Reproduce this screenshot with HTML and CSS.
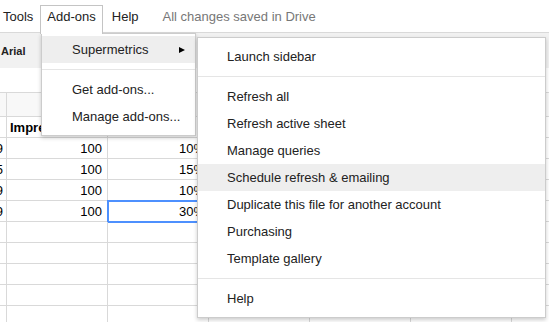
FILE: index.html
```html
<!DOCTYPE html>
<html lang="en">
<head>
    <meta charset="UTF-8">
    <meta name="viewport" content="width=device-width, initial-scale=1.0">
    <title>Add-ons menu</title>
    <link rel="stylesheet" href="styles.css">
</head>
<body>
    <div class="app">
        <div class="menubar">
            <span class="menu-item first">Tools</span>
            <span class="menu-item open">Add-ons</span>
            <span class="menu-item">Help</span>
            <span class="saved">All changes saved in Drive</span>
        </div>

        <div class="toolbar">
            <span class="font-name">Arial</span>
        </div>

        <div class="formula-bar"></div>

        <div class="grid">
            <!-- column headers -->
            <div class="cell head"></div><div class="cell head"></div><div class="cell head"></div><div class="cell head"></div><div class="cell head"></div><div class="cell head"></div><div class="cell head"></div>

            <div class="cell bold">CPC</div><div class="cell bold">Impressions</div><div class="cell bold">CTR</div><div class="cell"></div><div class="cell"></div><div class="cell"></div><div class="cell"></div>
            <div class="cell num first-col">0.09</div><div class="cell num">100</div><div class="cell num pct">10%</div><div class="cell"></div><div class="cell"></div><div class="cell"></div><div class="cell"></div>
            <div class="cell num first-col">0.15</div><div class="cell num">100</div><div class="cell num pct">15%</div><div class="cell"></div><div class="cell"></div><div class="cell"></div><div class="cell"></div>
            <div class="cell num first-col">0.09</div><div class="cell num">100</div><div class="cell num pct">10%</div><div class="cell"></div><div class="cell"></div><div class="cell"></div><div class="cell"></div>
            <div class="cell num first-col">0.09</div><div class="cell num">100</div><div class="cell num pct selected">30%</div><div class="cell"></div><div class="cell"></div><div class="cell"></div><div class="cell"></div>
            <div class="cell"></div><div class="cell"></div><div class="cell"></div><div class="cell"></div><div class="cell"></div><div class="cell"></div><div class="cell"></div>
            <div class="cell"></div><div class="cell"></div><div class="cell"></div><div class="cell"></div><div class="cell"></div><div class="cell"></div><div class="cell"></div>
            <div class="cell"></div><div class="cell"></div><div class="cell"></div><div class="cell"></div><div class="cell"></div><div class="cell"></div><div class="cell"></div>
            <div class="cell"></div><div class="cell"></div><div class="cell"></div><div class="cell"></div><div class="cell"></div><div class="cell"></div><div class="cell"></div>
            <div class="cell"></div><div class="cell"></div><div class="cell"></div><div class="cell"></div><div class="cell"></div><div class="cell"></div><div class="cell"></div>
        </div>

        <!-- Add-ons dropdown -->
        <div class="dropdown addons-menu">
            <div class="item active has-sub">Supermetrics <span class="arrow"></span></div>
            <div class="separator"></div>
            <div class="item">Get add-ons...</div>
            <div class="item">Manage add-ons...</div>
        </div>

        <!-- Supermetrics submenu -->
        <div class="dropdown submenu">
            <div class="item">Launch sidebar</div>
            <div class="separator"></div>
            <div class="item">Refresh all</div>
            <div class="item">Refresh active sheet</div>
            <div class="item">Manage queries</div>
            <div class="item active">Schedule refresh &amp; emailing</div>
            <div class="item">Duplicate this file for another account</div>
            <div class="item">Purchasing</div>
            <div class="item">Template gallery</div>
            <div class="separator"></div>
            <div class="item">Help</div>
        </div>
    </div>
</body>
</html>
```

FILE: styles.css
```css
body {
    margin: 0;
    font-family: "Liberation Sans", Arial, sans-serif;
    font-size: 13px;
    color: #222;
    background: #fff;
}
.app {
    position: relative;
    width: 549px;
    height: 322px;
    overflow: hidden;
}

/* menu bar */
.menubar {
    display: flex;
    align-items: flex-end;
    height: 32px;
    border-bottom: 1px solid #d9d9d9;
}
.menu-item {
    height: 27px;
    box-sizing: border-box;
    padding: 0 8px;
    border: 1px solid transparent;
    border-bottom: none;
    line-height: 22px;
    color: #222;
}
.menu-item.first {
    padding-left: 2px;
    padding-right: 6px;
}
.menu-item.open {
    position: relative;
    z-index: 3;
    height: 29px;
    margin-bottom: -2px;
    padding: 0 6px;
    background: #fff;
    border-color: #c4c4c4;
}
.saved {
    margin-left: 15px;
    height: 27px;
    line-height: 24px;
    color: #777;
}

/* toolbar + formula bar */
.toolbar {
    height: 35px;
    background: #f1f1f1;
    line-height: 35px;
    padding-left: 1px;
}
.font-name {
    font-size: 11px;
    font-weight: bold;
    color: #222;
}
.formula-bar {
    height: 24px;
}

/* sheet grid */
.grid {
    display: grid;
    grid-template-columns: repeat(7, 101px);
    margin-left: -94px;
    border-top: 1px solid #d9d9d9;
}
.cell {
    box-sizing: border-box;
    height: 21px;
    line-height: 21px;
    padding: 0 5px 0 3px;
    border-right: 1px solid #d9d9d9;
    border-bottom: 1px solid #d9d9d9;
    white-space: nowrap;
    color: #000;
}
.cell.head {
    height: 24px;
    background: #f8f8f8;
}
.cell.bold {
    font-weight: bold;
}
.cell.num {
    text-align: right;
}
.cell.first-col {
    padding-right: 3px;
}
.cell.pct {
    padding-right: 3px;
}
.cell.selected {
    outline: 2px solid #4d90fe;
    outline-offset: -1px;
}

/* menus */
.dropdown {
    position: absolute;
    z-index: 2;
    background: #fff;
    border: 1px solid rgba(0, 0, 0, 0.2);
    box-shadow: 0 2px 4px rgba(0, 0, 0, 0.2);
    color: #222;
}
.addons-menu {
    left: 41px;
    top: 33px;
    width: 153px;
    padding: 2px 0 5px;
}
.submenu {
    left: 197px;
    top: 37px;
    width: 347px;
    padding: 5px 0;
}
.item {
    height: 27px;
    line-height: 27px;
    padding-left: 30px;
    white-space: nowrap;
}
.submenu .item {
    padding-left: 29px;
}
.item.active {
    background: #eee;
}
.item.has-sub {
    display: flex;
    justify-content: space-between;
    align-items: center;
    padding-right: 10px;
}
.arrow {
    width: 0;
    height: 0;
    border-left: 6px solid #000;
    border-top: 3.5px solid transparent;
    border-bottom: 3.5px solid transparent;
}
.separator {
    height: 1px;
    margin: 6px 0;
    background: #e5e5e5;
}
```
